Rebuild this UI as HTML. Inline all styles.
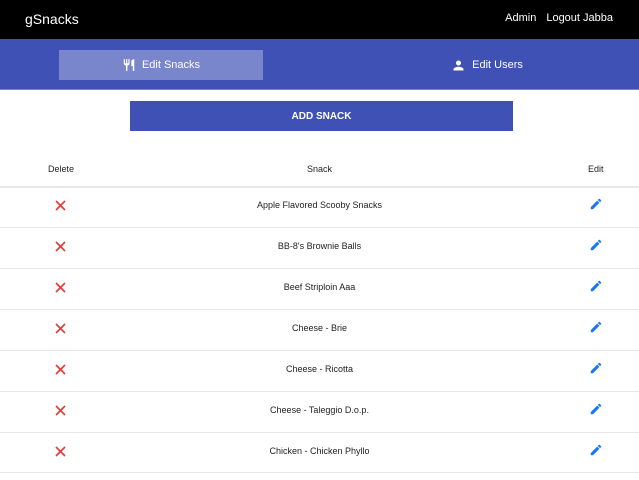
<!DOCTYPE html>
<html><head><meta charset="utf-8"><style>
*{margin:0;padding:0;box-sizing:border-box}
body{width:639px;height:480px;overflow:hidden;background:#fff;font-family:"Liberation Sans",sans-serif;position:relative}
.top{position:absolute;left:0;top:0;width:639px;height:39px;background:#000;color:#fff}
.logo{position:absolute;left:25px;top:11px;font-size:14px}
.nav{position:absolute;right:26px;top:12px;font-size:11px}
.nav span{margin-left:10px}
.bar{position:absolute;left:0;top:39px;width:639px;height:51px;background:#3f51b5;border-bottom:1px solid #7986cb;color:#fff;font-size:11px}
.tab{position:absolute;top:11px;height:30px;display:flex;align-items:center;justify-content:center;gap:6px}
.t1{left:59px;width:204px;background:#7986cb}
.t2{left:385px;width:204px}
.btn{position:absolute;left:130px;top:101px;width:383px;height:30px;background:#3f51b5;color:#fff;font-size:10px;font-weight:bold;display:flex;align-items:center;justify-content:center}
.hd{position:absolute;top:164px;font-size:9px;color:#222}
.line{position:absolute;left:0;width:639px;height:1px;background:#e8e8e8}
.row{position:absolute;left:0;width:639px;height:41px;font-size:9px;color:#222}
.row .n{position:absolute;left:0;width:639px;text-align:center;top:14px}
.row svg.x{position:absolute;left:55px;top:14px}
.row svg.p{position:absolute;left:589px;top:11px}
</style></head><body>
<div class="top"><div class="logo">gSnacks</div><div class="nav"><span>Admin</span><span>Logout Jabba</span></div></div>
<div class="bar">
<div class="tab t1"><svg width="14" height="14" viewBox="0 0 24 24"><path fill="#fff" d="M11 9H9V2H7v7H5V2H3v7c0 2.1 1.7 3.9 3.8 4V22h2.5v-9c2.1-.1 3.7-1.9 3.7-4V2h-2v7zm5-3v8h2.5v8H21V2c-2.8 0-5 2.2-5 4z"/></svg>Edit Snacks</div>
<div class="tab t2"><svg width="15" height="15" viewBox="0 0 24 24"><path fill="#fff" d="M12 12c2.2 0 4-1.8 4-4s-1.8-4-4-4-4 1.8-4 4 1.8 4 4 4zm0 2c-2.7 0-8 1.3-8 4v2h16v-2c0-2.7-5.3-4-8-4z"/></svg>Edit Users</div>
</div>
<div class="btn">ADD SNACK</div>
<div class="hd" style="left:48px">Delete</div>
<div class="hd" style="left:0;width:639px;text-align:center">Snack</div>
<div class="hd" style="left:588px">Edit</div>
<div class="line" style="top:186px;height:2px"></div>
<div class="row" style="top:186px"><svg class="x" width="11" height="11" viewBox="0 0 11 11"><path d="M1 1L10 10M10 1L1 10" stroke="#e53935" stroke-width="1.6"/></svg><div class="n">Apple Flavored Scooby Snacks</div><svg class="p" width="14" height="14" viewBox="0 0 24 24"><path fill="#1976f2" d="M3 17.25V21h3.75L17.8 9.94l-3.750-3.75L3 17.25zM20.7 7.04a1 1 0 000-1.41l-2.34-2.34a1 1 0 00-1.41 0l-1.83 1.83 3.75 3.75 1.83-1.83z"/></svg></div>
<div class="line" style="top:227px"></div>
<div class="row" style="top:227px"><svg class="x" width="11" height="11" viewBox="0 0 11 11"><path d="M1 1L10 10M10 1L1 10" stroke="#e53935" stroke-width="1.6"/></svg><div class="n">BB-8's Brownie Balls</div><svg class="p" width="14" height="14" viewBox="0 0 24 24"><path fill="#1976f2" d="M3 17.25V21h3.75L17.8 9.94l-3.75-3.75L3 17.25zM20.7 7.04a1 1 0 000-1.41l-2.34-2.34a1 1 0 00-1.41 0l-1.83 1.83 3.75 3.75 1.83-1.83z"/></svg></div>
<div class="line" style="top:268px"></div>
<div class="row" style="top:268px"><svg class="x" width="11" height="11" viewBox="0 0 11 11"><path d="M1 1L10 10M10 1L1 10" stroke="#e53935" stroke-width="1.6"/></svg><div class="n">Beef Striploin Aaa</div><svg class="p" width="14" height="14" viewBox="0 0 24 24"><path fill="#1976f2" d="M3 17.25V21h3.75L17.8 9.94l-3.75-3.75L3 17.25zM20.7 7.04a1 1 0 000-1.41l-2.34-2.34a1 1 0 00-1.41 0l-1.83 1.83 3.75 3.75 1.83-1.83z"/></svg></div>
<div class="line" style="top:309px"></div>
<div class="row" style="top:309px"><svg class="x" width="11" height="11" viewBox="0 0 11 11"><path d="M1 1L10 10M10 1L1 10" stroke="#e53935" stroke-width="1.6"/></svg><div class="n">Cheese - Brie</div><svg class="p" width="14" height="14" viewBox="0 0 24 24"><path fill="#1976f2" d="M3 17.25V21h3.75L17.8 9.94l-3.75-3.75L3 17.25zM20.7 7.04a1 1 0 000-1.41l-2.34-2.34a1 1 0 00-1.41 0l-1.83 1.83 3.75 3.75 1.83-1.83z"/></svg></div>
<div class="line" style="top:350px"></div>
<div class="row" style="top:350px"><svg class="x" width="11" height="11" viewBox="0 0 11 11"><path d="M1 1L10 10M10 1L1 10" stroke="#e53935" stroke-width="1.6"/></svg><div class="n">Cheese - Ricotta</div><svg class="p" width="14" height="14" viewBox="0 0 24 24"><path fill="#1976f2" d="M3 17.25V21h3.75L17.8 9.94l-3.75-3.75L3 17.25zM20.7 7.04a1 1 0 000-1.41l-2.34-2.34a1 1 0 00-1.41 0l-1.83 1.83 3.75 3.75 1.83-1.83z"/></svg></div>
<div class="line" style="top:391px"></div>
<div class="row" style="top:391px"><svg class="x" width="11" height="11" viewBox="0 0 11 11"><path d="M1 1L10 10M10 1L1 10" stroke="#e53935" stroke-width="1.6"/></svg><div class="n">Cheese - Taleggio D.o.p.</div><svg class="p" width="14" height="14" viewBox="0 0 24 24"><path fill="#1976f2" d="M3 17.25V21h3.75L17.8 9.94l-3.75-3.75L3 17.25zM20.7 7.04a1 1 0 000-1.41l-2.34-2.34a1 1 0 00-1.41 0l-1.83 1.83 3.75 3.75 1.83-1.83z"/></svg></div>
<div class="line" style="top:432px"></div>
<div class="row" style="top:432px"><svg class="x" width="11" height="11" viewBox="0 0 11 11"><path d="M1 1L10 10M10 1L1 10" stroke="#e53935" stroke-width="1.6"/></svg><div class="n">Chicken - Chicken Phyllo</div><svg class="p" width="14" height="14" viewBox="0 0 24 24"><path fill="#1976f2" d="M3 17.25V21h3.75L17.8 9.94l-3.75-3.75L3 17.25zM20.7 7.04a1 1 0 000-1.41l-2.34-2.34a1 1 0 00-1.41 0l-1.83 1.83 3.75 3.75 1.83-1.83z"/></svg></div>
<div class="line" style="top:472px"></div>
</body></html>
